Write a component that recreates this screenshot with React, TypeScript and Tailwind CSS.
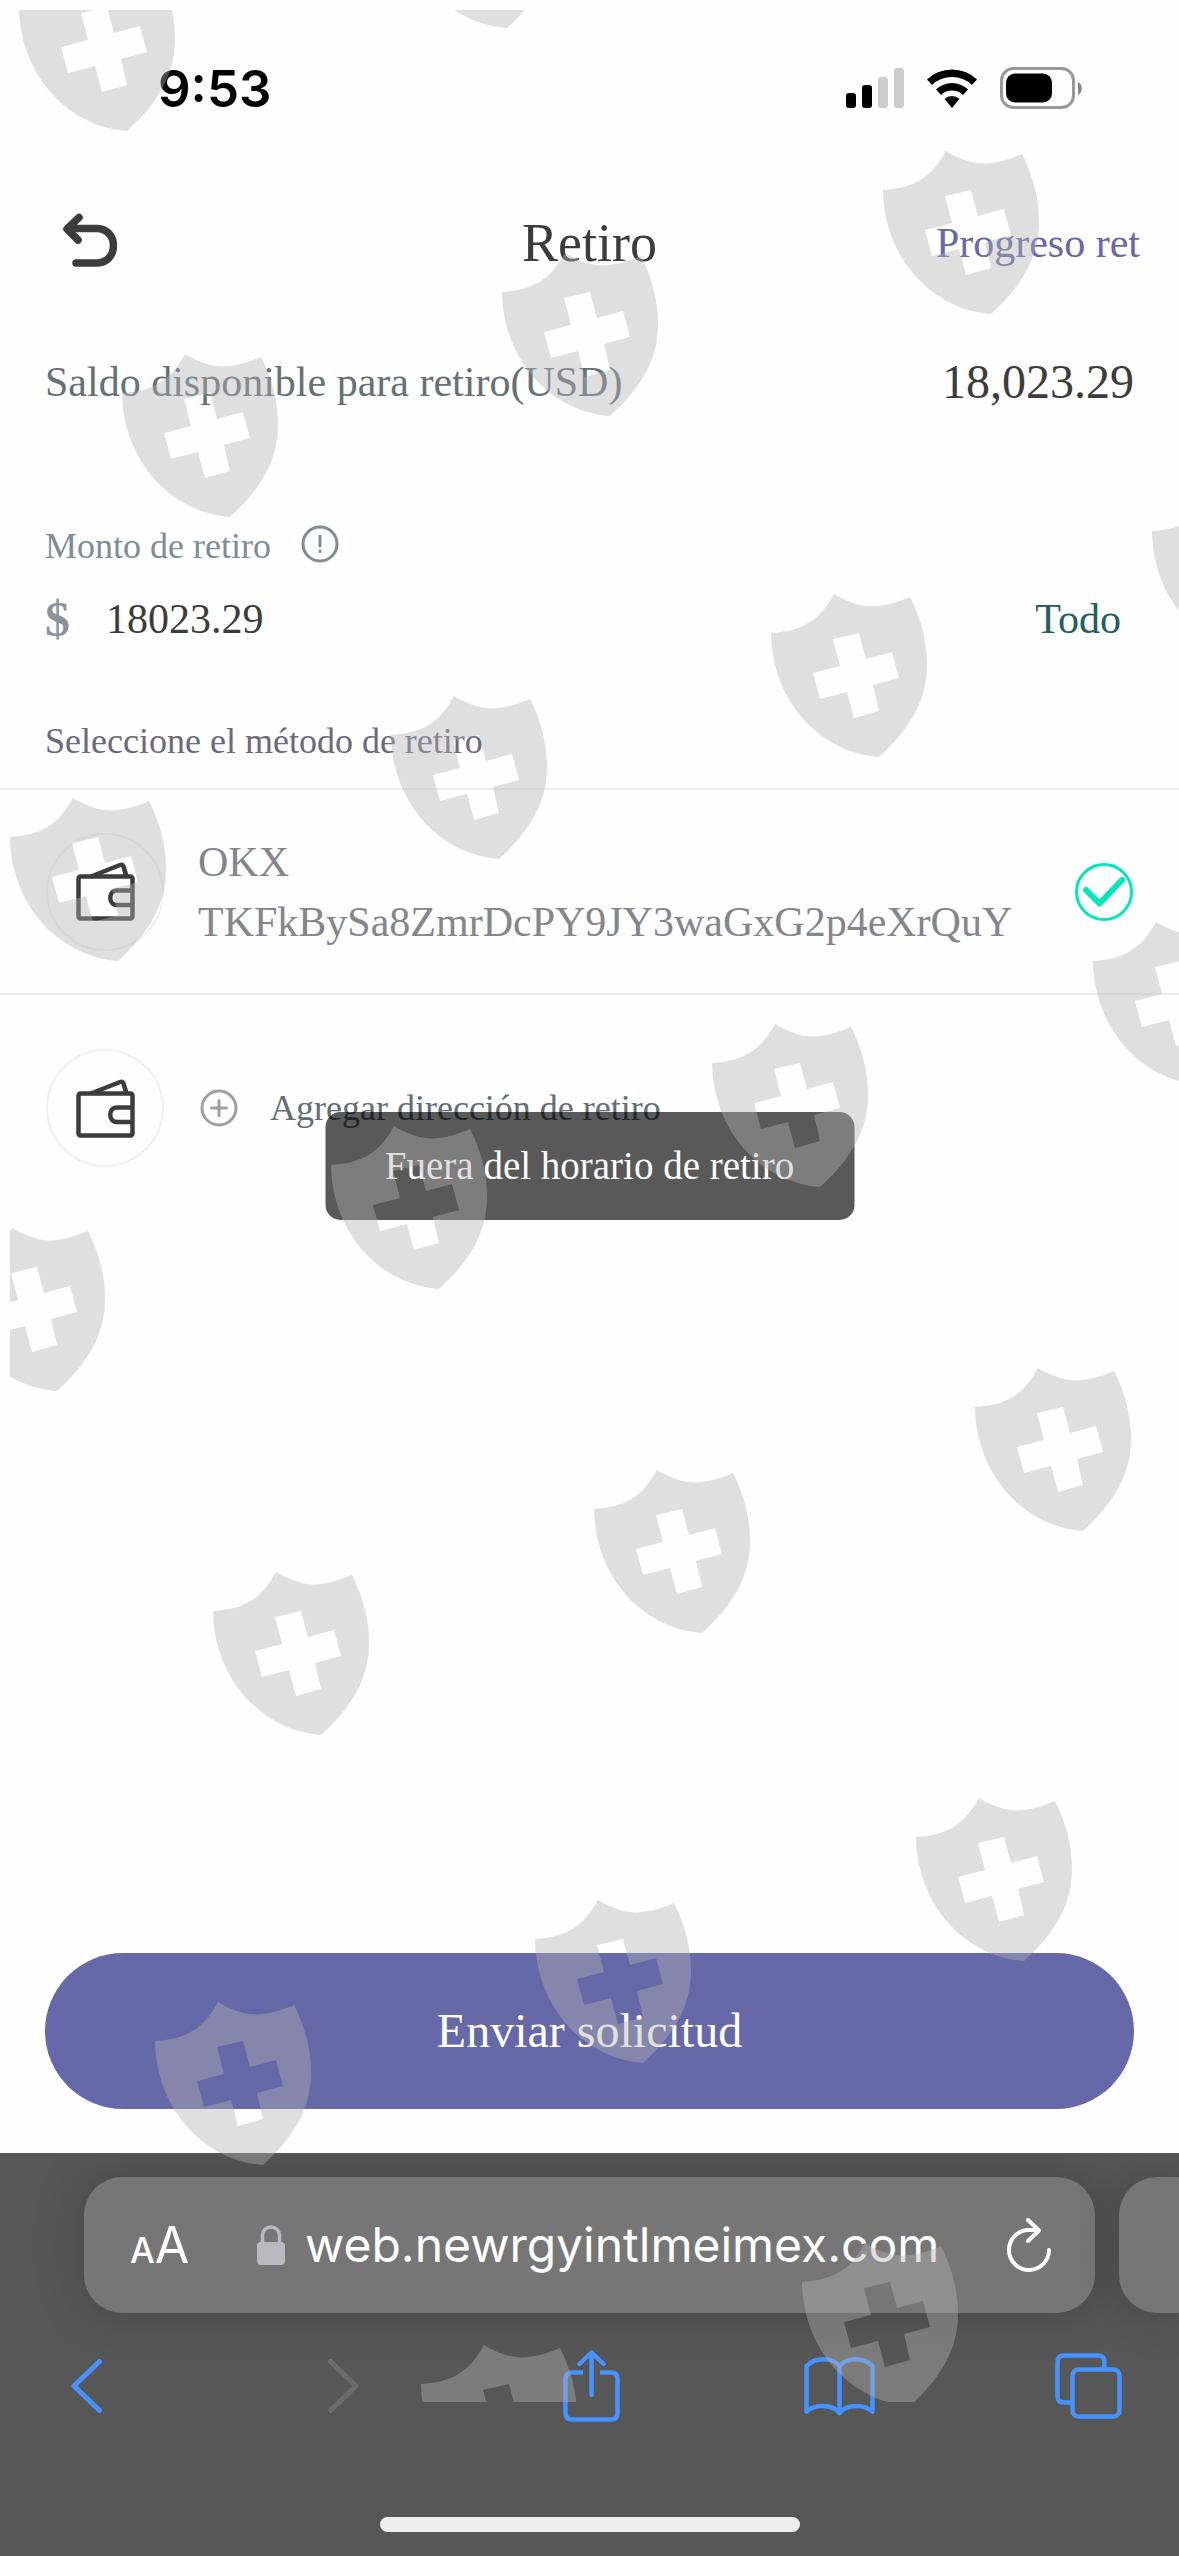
import React from "react";

const SHIELDS: [number, number][] = [
  [19, -32], [399, -135], [883, 151], [502, 253], [122, 354],
  [1152, 492], [771, 594], [391, 696], [10, 798],
  [1093, 922], [712, 1024], [331, 1126], [-51, 1228],
  [975, 1368], [594, 1470], [213, 1572],
  [916, 1798], [535, 1900], [155, 2002],
  [802, 2243], [421, 2345],
];

function Watermark() {
  return (
    <div className="pointer-events-none absolute top-[10px] right-0 left-[10px] h-[2392px] overflow-hidden" aria-hidden="true">
      <svg className="absolute -top-[10px] -left-[10px] h-[2556px] w-[1179px]" viewBox="0 0 1179 2556">
        <defs>
          <path
            id="shield"
            fillRule="evenodd"
            d="M0 39C32 37 49 26 63 0C90 16 108 16 139 3C150 25 156 47 156 71C156 105 140 134 108 163C51 159 1 109 0 39ZM62 45L88 39L95 65L121 58L128 84L102 91L108 117L83 124L76 98L49 105L42 79L69 72Z"
          />
        </defs>
        {SHIELDS.map(([x, y]) => (
          <use key={`${x},${y}`} href="#shield" x={x} y={y} fill="#b3b3b3" fillOpacity={0.407} />
        ))}
      </svg>
    </div>
  );
}

function StatusBar() {
  return (
    <div className="flex h-[176px] items-center justify-between pr-[96px] pl-[158px]">
      <span className="font-[Inter,sans-serif] text-[51px] leading-none font-semibold text-black">9:53</span>
      <div className="flex items-center gap-[23px]">
        <svg className="h-[40px] w-[58px]" viewBox="0 0 58 40" aria-label="Señal">
          <rect x="0" y="25" width="10" height="15" rx="3" />
          <rect x="16" y="17" width="10" height="23" rx="3" />
          <rect x="32" y="9" width="10" height="31" rx="3" fill="#ccc" />
          <rect x="48" y="0" width="10" height="40" rx="3" fill="#ccc" />
        </svg>
        <svg className="h-[40px] w-[50px]" viewBox="0 0 50 40" aria-label="Wi-Fi">
          <path d="M0 11.500A36 36 0 0 1 50 11.500L45 17A29 29 0 0 0 5 17Z" />
          <path d="M9 21.500A23 23 0 0 1 41 21.500L36 27A16 16 0 0 0 14 27Z" />
          <path d="M17.500 31A11 11 0 0 1 32.500 31L25 40Z" />
        </svg>
        <svg className="h-[42px] w-[83px]" viewBox="0 0 83 42" aria-label="Batería">
          <rect x="1.500" y="1.500" width="72" height="39" rx="12" fill="none" stroke="#999" strokeWidth="3" />
          <rect x="6" y="6.500" width="46" height="29" rx="9" />
          <path d="M78 15C83 17 83 26 78 28Z" fill="#888" />
        </svg>
      </div>
    </div>
  );
}

function WalletIcon() {
  return (
    <span className="flex size-[118px] shrink-0 items-center justify-center rounded-full border-2 border-[#f0f0f0]">
      <svg className="size-[59px]" viewBox="0 0 59 59" fill="none" stroke="#3c3c3c" strokeWidth="4.500" strokeLinejoin="round">
        <rect x="2.500" y="14.500" width="54" height="42" rx="2" />
        <path d="M15 14.500L44 3Q46.500 2 47.500 4.500L50.500 14.500" />
        <path d="M56 28.500H41C32 28.500 32 43 41 43H56" />
      </svg>
    </span>
  );
}

function BrowserBar() {
  return (
    <footer className="flex h-[403px] flex-col overflow-hidden bg-[#575757]">
      <div className="flex gap-[24px] pt-[24px] pl-[84px]">
        <div className="flex h-[136px] flex-1 items-center rounded-[38px] bg-[#767676] pr-[44px] pl-[46px] font-[Inter,sans-serif] text-white shadow-[0_0_50px_rgba(0,0,0,0.22)]">
          <button className="flex items-baseline leading-none" aria-label="Tamaño del texto">
            <span className="text-[35px] font-medium">A</span>
            <span className="text-[50px]">A</span>
          </button>
          <div className="flex flex-1 items-center justify-center gap-[20px]">
            <svg className="h-[40px] w-[28px]" viewBox="0 0 28 40" aria-hidden="true">
              <rect x="0" y="17" width="28" height="23" rx="4" fill="#bab9c1" />
              <path d="M5.500 18V11C5.500-1 22.500-1 22.500 11V18" fill="none" stroke="#bab9c1" strokeWidth="3.500" />
            </svg>
            <span className="text-[48px] leading-none">web.newrgyintlmeimex.com</span>
          </div>
          <button aria-label="Recargar">
            <svg className="h-[54px] w-[44px]" viewBox="0 0 44 54" fill="none" stroke="#fff" strokeWidth="4" strokeLinecap="round" strokeLinejoin="round">
              <path d="M42 32A20 20 0 1 1 22 12H31" />
              <path d="M21 2L32 12.500L21 23" />
            </svg>
          </button>
        </div>
        <div className="h-[136px] w-[60px] rounded-l-[38px] bg-[#767676] shadow-[0_0_50px_rgba(0,0,0,0.22)]" />
      </div>
      <nav className="flex h-[146px] items-center justify-between pr-[55px] pl-[59px]">
        <button aria-label="Atrás" className="flex w-[72px] pl-[12px]">
          <svg className="h-[54px] w-[31px]" viewBox="0 0 31 54" fill="none" stroke="#4693ff" strokeWidth="5" strokeLinecap="round" strokeLinejoin="round">
            <path d="M28.500 2.500L3 27L28.500 51.500" />
          </svg>
        </button>
        <button aria-label="Adelante" disabled className="flex w-[72px] justify-center">
          <svg className="h-[54px] w-[31px]" viewBox="0 0 31 54" fill="none" stroke="#6c6c6c" strokeWidth="5" strokeLinecap="round" strokeLinejoin="round">
            <path d="M2.500 2.500L28 27L2.500 51.500" />
          </svg>
        </button>
        <button aria-label="Compartir" className="flex w-[72px] justify-center">
          <svg className="h-[72px] w-[57px]" viewBox="0 0 57 72" fill="none" stroke="#4693ff" strokeWidth="4.500" strokeLinejoin="round">
            <path d="M20 22.500H9Q2.500 22.500 2.500 29V63Q2.500 69.500 9 69.500H48Q54.500 69.500 54.500 63V29Q54.500 22.500 48 22.500H37" />
            <path d="M28.500 45V3M16.500 14L28.500 2.500L40.500 14" strokeLinecap="round" />
          </svg>
        </button>
        <button aria-label="Marcadores" className="flex w-[72px] justify-center">
          <svg className="h-[60px] w-[71px]" viewBox="0 0 71 60" fill="none" stroke="#4693ff" strokeWidth="4.500" strokeLinejoin="round">
            <path d="M35.500 10C28 1 11 1 2.500 10V55.500C11 48 28 48 35.500 57C43 48 60 48 68.500 55.500V10C60 1 43 1 35.500 10V57" />
          </svg>
        </button>
        <button aria-label="Pestañas" className="flex w-[72px] justify-center">
          <svg className="h-[66px] w-[67px]" viewBox="0 0 67 66" fill="none" stroke="#4693ff" strokeWidth="4.500">
            <rect x="17.500" y="16.500" width="47" height="47" rx="6" />
            <path d="M17 49.500H9Q2.500 49.500 2.500 43V9Q2.500 2.500 9 2.500H43Q49.500 2.500 49.500 9V16" />
          </svg>
        </button>
      </nav>
      <div className="mt-[58px] h-[15px] w-[420px] self-center rounded-full bg-[#eee]" />
    </footer>
  );
}

export default function App() {
  return (
    <div className="relative flex min-h-[2556px] flex-col overflow-hidden bg-[#fefefe] font-['Liberation_Serif',serif]">
      <StatusBar />
      <header className="grid h-[134px] grid-cols-[1fr_auto_1fr] items-center px-[39px]">
        <button className="mb-1 ml-6 justify-self-start" aria-label="Volver">
          <svg className="h-[56px] w-[54px]" viewBox="0 0 54 56" fill="none" stroke="#3c3c3c" strokeWidth="7.500" strokeLinecap="round" strokeLinejoin="round">
            <path d="M16 4.500L4 16L15 27M5 15.500H34C56 16 56 49.500 34 50H13" />
          </svg>
        </button>
        <h1 className="text-[54px] text-[#3c3c3c]">Retiro</h1>
        <a href="#progreso" className="justify-self-end text-[42px] whitespace-nowrap text-[#6668a7]">Progreso ret</a>
      </header>

      <main className="flex flex-1 flex-col">
        <div className="flex h-[144px] items-center justify-between px-[45px]">
          <span className="text-[42px] text-[#687077]">Saldo disponible para retiro(USD)</span>
          <span className="text-[48px] text-[#3c3c3c]">18,023.29</span>
        </div>

        <div className="mt-[64px] flex h-[56px] items-center px-[45px] text-[#818d96]">
          <label htmlFor="monto" className="text-[36px]">Monto de retiro</label>
          <svg className="mb-1 ml-[30px] size-[38px]" viewBox="0 0 38 38" fill="none" stroke="#818d96" strokeWidth="3" strokeLinecap="round">
            <circle cx="19" cy="19" r="17" />
            <path d="M19 11V21M19 26V26.500" />
          </svg>
        </div>
        <div className="flex h-[90px] items-center pr-[58px] pl-[45px]">
          <span className="text-[50px] font-bold text-[#8e929e]">$</span>
          <input id="monto" defaultValue="18023.29" className="ml-[36px] min-w-0 flex-1 bg-transparent text-[42px] text-[#3c3c3c] outline-none" />
          <button className="text-[42px] text-[#235d63]">Todo</button>
        </div>
        <h2 className="mt-[44px] mb-[14px] flex h-[66px] items-center px-[45px] text-[36px] text-[#6c6a7a]">Seleccione el método de retiro</h2>

        <div className="flex h-[207px] items-center border-y-2 border-[#ececf0] px-[46px]">
          <WalletIcon />
          <div className="ml-[34px] flex-1 text-[42px] leading-[60px] text-[#84868c]">
            <p>OKX</p>
            <p>TKFkBySa8ZmrDcPY9JY3waGxG2p4eXrQuY</p>
          </div>
          <svg className="size-[58px]" viewBox="0 0 58 58" fill="none" stroke="#00e8b9" strokeLinecap="round" strokeLinejoin="round" aria-label="Seleccionado">
            <circle cx="29" cy="29" r="27.500" strokeWidth="3" />
            <path d="M11 27L24.500 40.500L47 17" strokeWidth="6" />
          </svg>
        </div>

        <button className="flex h-[226px] items-center px-[46px] text-left">
          <WalletIcon />
          <svg className="ml-[36px] size-[38px]" viewBox="0 0 38 38" fill="none" stroke="#a0a0a0" strokeWidth="3" strokeLinecap="round">
            <circle cx="19" cy="19" r="17" />
            <path d="M19 11.500V26.500M11.500 19H26.500" />
          </svg>
          <span className="ml-[32px] text-[36px] text-[#626d77]">Agregar dirección de retiro</span>
        </button>

        <div className="mt-auto px-[45px] pb-[44px]">
          <button className="h-[156px] w-full rounded-full bg-[#6668a7] text-[48px] text-white">Enviar solicitud</button>
        </div>
      </main>

      <BrowserBar />

      <div role="status" className="absolute top-[1112px] left-1/2 flex h-[108px] w-[529px] -translate-x-1/2 items-center justify-center rounded-[15px] bg-black/65 text-[39px] text-white">
        Fuera del horario de retiro
      </div>
      <Watermark />
    </div>
  );
}
